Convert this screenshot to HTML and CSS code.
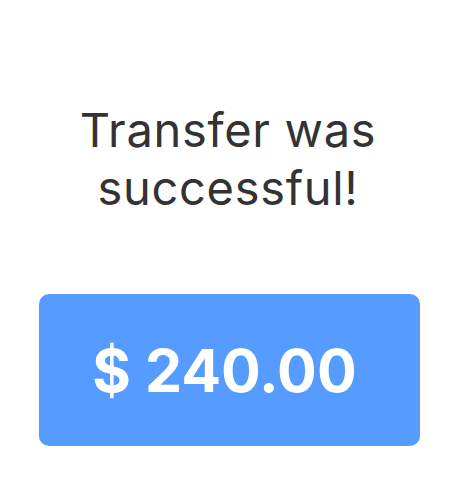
FILE: index.html
```html
<!DOCTYPE html>
<html>
<head>
<meta charset="utf-8">
<link rel="stylesheet" href="styles.css">
</head>
<body>
<main class="screen">
  <h1 class="title">Transfer was<br>successful!</h1>
  <div class="amount-card">
    <span class="amount">$ 240.00</span>
  </div>
</main>
</body>
</html>
```
FILE: styles.css
```css
html, body {
  margin: 0;
  padding: 0;
  background: #ffffff;
}
.screen {
  width: 456px;
  height: 486px;
  display: flex;
  flex-direction: column;
  align-items: center;
  font-family: Inter, "Noto Sans", sans-serif;
}
.title {
  margin: 101px 0 0;
  font-size: 47px;
  font-weight: 400;
  line-height: 58px;
  letter-spacing: 0.7px;
  color: #333333;
  text-align: center;
}
.amount-card {
  margin: 77px 0 0 3px;
  width: 381px;
  height: 152px;
  box-sizing: border-box;
  background: #569bff;
  border-radius: 10px;
  display: flex;
  align-items: center;
  justify-content: center;
}
.amount {
  color: #ffffff;
  font-size: 59px;
  font-weight: 700;
  margin-right: 10px;
}
```
